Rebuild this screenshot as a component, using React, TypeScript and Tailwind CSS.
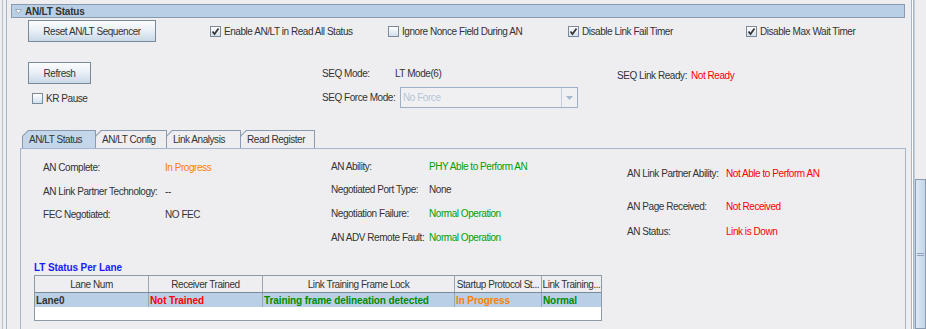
import type { ReactNode } from "react";

const Check = ({ checked }: { checked?: boolean }) => (
  <span className="flex h-[11px] w-[11px] shrink-0 items-center justify-center border border-[#7a8a99] bg-gradient-to-b from-white to-[#d3dfeb]">
    {checked && (
      <svg width="9" height="9" viewBox="0 0 9 9">
        <path d="M1.5 4.5 L3.5 7 L7.5 1.5" fill="none" stroke="#333" strokeWidth="1.7" />
      </svg>
    )}
  </span>
);

const CheckItem = ({ label, checked, className = "" }: { label: string; checked?: boolean; className?: string }) => (
  <div className={`flex items-center gap-[3px] ${className}`}>
    <Check checked={checked} />
    <span>{label}</span>
  </div>
);

const Button = ({ children, className = "" }: { children: ReactNode; className?: string }) => (
  <div
    className={`flex h-[22px] items-center justify-center border border-[#7a8a99] bg-gradient-to-b from-[#fbfcfe] via-[#e8eff6] to-[#c9d8e8] ${className}`}
  >
    {children}
  </div>
);

const Field = ({ label, value, color = "text-[#333]", w }: { label: string; value: string; color?: string; w: string }) => (
  <div className="flex h-[14px] items-center">
    <span className={w}>{label}</span>
    <span className={color}>{value}</span>
  </div>
);

const Tab = ({ label, selected, w }: { label: string; selected?: boolean; w: string }) => (
  <div
    className={`${w} relative -ml-[1px] h-[18px] bg-[#8a9bb0] pl-[1px] pr-[1px] pt-[1px] [clip-path:polygon(6px_0,100%_0,100%_100%,0_100%,0_6px)] ${selected ? "z-10" : ""}`}
  >
    <div
      className={`flex h-full items-center pl-[6px] pb-[1px] [clip-path:polygon(5.5px_0,100%_0,100%_100%,0_100%,0_5.5px)] ${
        selected ? "bg-[#c4d6ea]" : "bg-[#eeeef0]"
      }`}
    >
      {label}
    </div>
  </div>
);

const lanes = [
  { name: "Lane Num", w: "w-[114px]" },
  { name: "Receiver Trained", w: "w-[114px]" },
  { name: "Link Training Frame Lock", w: "w-[192px]" },
  { name: "Startup Protocol St...", w: "w-[87px]" },
  { name: "Link Training...", w: "w-[59px]" },
];

const row = [
  { text: "Lane0", color: "text-[#333]" },
  { text: "Not Trained", color: "text-[#ff0000]" },
  { text: "Training frame delineation detected", color: "text-[#008a00]" },
  { text: "In Progress", color: "text-[#ff8000]" },
  { text: "Normal", color: "text-[#008a00]" },
];

export default function App() {
  return (
    <div className="flex h-[329px] w-[926px] overflow-hidden bg-[#eeeef0] font-['Liberation_Sans',Arial,sans-serif] text-[10px] tracking-[-0.45px] text-[#333]">
      {/* left frame edge */}
      <div className="flex w-[8px] shrink-0">
        <div className="ml-[2px] w-[1px] bg-[#b4c2d0]" />
        <div className="ml-[3px] w-[1px] bg-[#a3b6ca]" />
      </div>

      {/* main */}
      <div className="w-[903px] shrink-0">
        <div className="ml-[3px] mt-[4px] flex h-[14px] w-[894px] items-center border border-[#8a9bb0] bg-[#b8cfe5]">
          <svg width="7" height="5" viewBox="0 0 7 5" className="ml-[3px]">
            <polygon points="0.5,0.5 6.5,0.5 3.5,4.5" fill="#fff" stroke="#8a9bb0" strokeWidth="0.8" />
          </svg>
          <span className="ml-[3px] font-bold tracking-[-0.2px]">AN/LT Status</span>
        </div>

        <div className="mt-[2px] flex h-[22px] items-center pl-[20px]">
          <Button className="w-[128px]">Reset AN/LT Sequencer</Button>
          <CheckItem className="ml-[54px] w-[178px]" label="Enable AN/LT in Read All Status" checked />
          <CheckItem className="w-[180px]" label="Ignore Nonce Field During AN" />
          <CheckItem className="w-[178px]" label="Disable Link Fail Timer" checked />
          <CheckItem label="Disable Max Wait Timer" checked />
        </div>

        <div className="mt-[20px] flex pl-[20px]">
          <div className="w-[294px]">
            <Button className="w-[63px]">Refresh</Button>
            <CheckItem className="ml-[4px] mt-[9px] h-[11px]" label="KR Pause" />
          </div>
          <div className="w-[295px]">
            <div className="mt-[4px]">
              <Field w="w-[73px]" label="SEQ Mode:" value="LT Mode(6)" />
            </div>
            <div className="mt-[7px] flex items-center">
              <span className="w-[78px]">SEQ Force Mode:</span>
              <div className="flex h-[21px] w-[178px] border border-[#9db0c8] bg-[#f0f0f3]">
                <span className="flex flex-1 items-center pl-[2px] text-[#b8c4d4]">No Force</span>
                <div className="flex w-[16px] items-center justify-center border-l border-[#c3cfdc]">
                  <svg width="7" height="4" viewBox="0 0 7 4">
                    <polygon points="0,0 7,0 3.5,4" fill="#a7b8cc" />
                  </svg>
                </div>
              </div>
            </div>
          </div>
          <div className="mt-[6px]">
            <Field w="w-[74px]" label="SEQ Link Ready:" value="Not Ready" color="text-[#ff0000]" />
          </div>
        </div>

        {/* tabs */}
        <div className="mt-[22px] flex pl-[15px]">
          <Tab label="AN/LT Status" selected w="w-[74px]" />
          <Tab label="AN/LT Config" w="w-[72px]" />
          <Tab label="Link Analysis" w="w-[75px]" />
          <Tab label="Read Register" w="w-[75px]" />
        </div>

        <div className="ml-[12px] h-[200px] w-[886px] border border-[#a3b8cf]">
          <div className="flex pl-[22px]">
            <div className="mt-[11px] flex w-[288px] flex-col gap-[10px]">
              <Field w="w-[122px]" label="AN Complete:" value="In Progress" color="text-[#ff8000]" />
              <Field w="w-[122px]" label="AN Link Partner Technology:" value="--" />
              <div className="-mt-[1px]">
                <Field w="w-[122px]" label="FEC Negotiated:" value="NO FEC" />
              </div>
            </div>
            <div className="mt-[10px] flex w-[296px] flex-col gap-[9px]">
              <Field w="w-[98px]" label="AN Ability:" value="PHY Able to Perform AN" color="text-[#00a000]" />
              <Field w="w-[98px]" label="Negotiated Port Type:" value="None" />
              <div className="mt-[1px]">
                <Field w="w-[98px]" label="Negotiation Failure:" value="Normal Operation" color="text-[#00a000]" />
              </div>
              <div className="mt-[1px]">
                <Field w="w-[98px]" label="AN ADV Remote Fault:" value="Normal Operation" color="text-[#00a000]" />
              </div>
            </div>
            <div className="mt-[17px] flex flex-col">
              <Field w="w-[99px]" label="AN Link Partner Ability:" value="Not Able to Perform AN" color="text-[#ff0000]" />
              <div className="mt-[19px]">
                <Field w="w-[99px]" label="AN Page Received:" value="Not Received" color="text-[#ff0000]" />
              </div>
              <div className="mt-[11px]">
                <Field w="w-[99px]" label="AN Status:" value="Link is Down" color="text-[#ff0000]" />
              </div>
            </div>
          </div>

          <div className="pl-[13px]">
            <div className="mt-[16px] flex h-[14px] items-center font-bold tracking-[-0.1px] text-[#1a1aff]">
              LT Status Per Lane
            </div>
            <div className="mt-[1px] w-[568px] border border-[#8e9aa6] bg-white">
              <div className="flex h-[17px] border-b border-[#7a8a99] bg-[#eeeef0]">
                {lanes.map((c) => (
                  <div
                    key={c.name}
                    className={`${c.w} flex items-center justify-center overflow-hidden whitespace-nowrap border-r border-[#9aa6b2] last:border-r-0`}
                  >
                    {c.name}
                  </div>
                ))}
              </div>
              <div className="flex h-[14px] bg-[#b8cfe5] font-bold tracking-[-0.1px]">
                {row.map((c, i) => (
                  <div
                    key={c.text}
                    className={`${lanes[i].w} ${c.color} flex items-center overflow-hidden whitespace-nowrap border-r border-[#9aa6b2] pl-[1px] last:border-r-0`}
                  >
                    {c.text}
                  </div>
                ))}
              </div>
              <div className="h-[13px]" />
            </div>
            <div className="mt-[5px] flex h-[14px] items-center font-bold tracking-[-0.1px] text-[#1a1aff]">
              LP Base Page
            </div>
          </div>
        </div>
      </div>

      {/* right edge + scrollbar */}
      <div className="flex w-[15px] shrink-0">
        <div className="w-[1px] bg-[#a3b6ca]" />
        <div className="w-[1px] bg-white" />
        <div className="w-[1px] bg-[#a3b6ca]" />
        <div className="flex w-[12px] flex-col border-l border-[#c3cfdc] bg-[#eeeef0]">
          <div className="h-[182px]" />
          <div className="flex h-[152px] items-center justify-center border border-[#8a9bb0] bg-gradient-to-r from-[#dde8f3] to-[#c4d6ea]">
            <div className="flex flex-col gap-[1px]">
              <div className="h-[1px] w-[7px] bg-[#8fa5be]" />
              <div className="h-[1px] w-[7px] bg-[#8fa5be]" />
            </div>
          </div>
        </div>
      </div>
    </div>
  );
}
